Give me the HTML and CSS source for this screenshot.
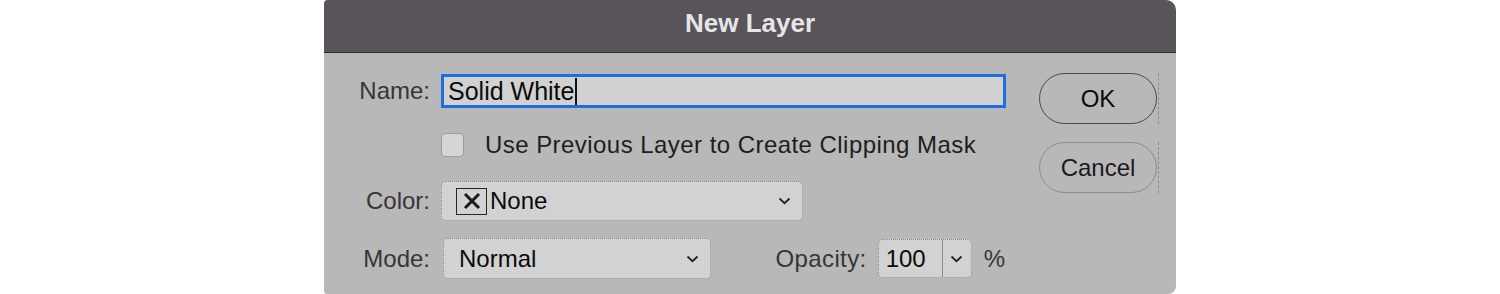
FILE: index.html
```html
<!DOCTYPE html>
<html lang="en">
<head>
<meta charset="utf-8">
<title>New Layer</title>
<link rel="stylesheet" href="styles.css">
</head>
<body>
<div class="dialog">
  <div class="titlebar">New Layer</div>
  <div class="content">
    <div class="form">
      <div class="row row-name">
        <label class="label">Name:</label>
        <div class="textfield"><span class="value">Solid White</span><span class="caret"></span></div>
      </div>
      <div class="row row-check">
        <span class="label"></span>
        <div class="checkline">
          <span class="checkbox"></span>
          <span class="checktext">Use Previous Layer to Create Clipping Mask</span>
        </div>
      </div>
      <div class="row row-color">
        <label class="label">Color:</label>
        <div class="select select-color">
          <span class="xbox"><svg width="22" height="20" viewBox="0 0 22 20"><path d="M4 3 L18 17 M18 3 L4 17" stroke="#1a1a1a" stroke-width="3" fill="none"/></svg></span>
          <span class="selval">None</span>
          <svg class="chev" width="13" height="8" viewBox="0 0 13 8"><path d="M1.5 1.5 L6.5 6.2 L11.5 1.5" stroke="#222" stroke-width="1.8" fill="none"/></svg>
        </div>
      </div>
      <div class="row row-mode">
        <label class="label">Mode:</label>
        <div class="modeline">
          <div class="select select-mode">
            <span class="selval">Normal</span>
            <svg class="chev" width="13" height="8" viewBox="0 0 13 8"><path d="M1.5 1.5 L6.5 6.2 L11.5 1.5" stroke="#222" stroke-width="1.8" fill="none"/></svg>
          </div>
          <div class="opacity">
            <span class="label-inline">Opacity:</span>
            <div class="combo">
              <span class="combo-val">100</span>
              <span class="combo-btn"><svg width="13" height="8" viewBox="0 0 13 8"><path d="M1.5 1.5 L6.5 6.2 L11.5 1.5" stroke="#222" stroke-width="1.8" fill="none"/></svg></span>
            </div>
            <span class="pct">%</span>
          </div>
        </div>
      </div>
    </div>
    <div class="buttons">
      <div class="btnwrap"><button class="btn btn-ok">OK</button></div>
      <div class="btnwrap"><button class="btn btn-cancel">Cancel</button></div>
    </div>
  </div>
</div>
</body>
</html>
```
FILE: styles.css
```css
html, body {
  margin: 0;
  padding: 0;
  background: #ffffff;
}
body {
  font-family: "Liberation Sans", Arial, sans-serif;
}
.dialog {
  width: 852px;
  height: 294px;
  margin: 0 auto;
  background: #b8b8b8;
  border-radius: 4px 10px 8px 3px;
  overflow: hidden;
}
.titlebar {
  height: 52px;
  line-height: 46px;
  background: #59545a;
  border-bottom: 1px solid #2c2a2c;
  color: #e6e6e6;
  font-weight: bold;
  font-size: 26px;
  text-align: center;
}
.content {
  display: flex;
  padding: 20px 0 0 30px;
}
.form {
  width: 652px;
  margin-top: 1px;
  display: flex;
  flex-direction: column;
}
.row {
  display: flex;
  align-items: center;
}
.label {
  width: 76px;
  flex: none;
  text-align: right;
  margin-right: 11px;
  font-size: 24px;
  color: #363636;
}
.row-name { height: 34px; }
.row-check { height: 24px; margin-top: 25px; }
.row-color { height: 40px; margin-top: 24px; }
.row-mode { height: 41px; margin-top: 17px; }

.textfield {
  width: 565px;
  height: 34px;
  box-sizing: border-box;
  border: 3px solid #1b6fe3;
  background: #d1d1d1;
  display: flex;
  align-items: center;
  padding-left: 4px;
  font-size: 25px;
  color: #0a0a0a;
}
.caret {
  width: 2px;
  height: 27px;
  background: #111;
  margin-left: 1px;
}
.checkline {
  display: flex;
  align-items: center;
}
.checkbox {
  width: 23px;
  height: 24px;
  box-sizing: border-box;
  border: 1px solid #9c9c9c;
  border-radius: 4px;
  background: #d6d6d6;
}
.checktext {
  margin-left: 21px;
  font-size: 24px;
  letter-spacing: 0.45px;
  color: #1e1e1e;
}
.select {
  height: 40px;
  box-sizing: border-box;
  border: 1px dotted #8a8a8a;
  border-radius: 5px;
  background: #d2d2d2;
  display: flex;
  align-items: center;
  font-size: 24px;
  color: #0a0a0a;
}
.select-color {
  width: 362px;
  padding-left: 14px;
}
.xbox {
  width: 31px;
  height: 27px;
  box-sizing: border-box;
  border: 1.5px solid #262626;
  display: flex;
  align-items: center;
  justify-content: center;
  margin-right: 3px;
}
.selval {
  flex: 1;
}
.chev {
  margin-right: 11px;
}
.modeline {
  flex: 1;
  display: flex;
  align-items: center;
  margin-left: 2px;
}
.select-mode {
  width: 268px;
  height: 41px;
  padding-left: 15px;
}
.opacity {
  margin-left: auto;
  display: flex;
  align-items: center;
}
.label-inline {
  font-size: 24px;
  color: #363636;
  letter-spacing: 0.4px;
  margin-right: 11px;
}
.combo {
  width: 94px;
  height: 39px;
  box-sizing: border-box;
  border: 1px dotted #8a8a8a;
  border-radius: 5px;
  background: #d2d2d2;
  display: flex;
  align-items: stretch;
}
.combo-val {
  width: 64px;
  box-sizing: border-box;
  padding-left: 7px;
  display: flex;
  align-items: center;
  font-size: 24px;
  color: #0a0a0a;
  border-right: 1px solid #8f8f8f;
}
.combo-btn {
  flex: 1;
  display: flex;
  align-items: center;
  justify-content: center;
}
.pct {
  margin-left: 12px;
  margin-right: 1px;
  font-size: 24px;
  color: #363636;
}
.buttons {
  margin-left: 33px;
  display: flex;
  flex-direction: column;
  gap: 18px;
}
.btnwrap {
  padding-right: 1px;
  border-right: 1px dashed #8e8e8e;
  display: flex;
}
.btn {
  width: 118px;
  height: 51px;
  border-radius: 26px;
  background: #b8b8b8;
  font-family: "Liberation Sans", Arial, sans-serif;
  font-size: 24px;
  color: #0a0a0a;
  padding: 0;
  margin: 0;
}
.btn-ok {
  border: 1.5px solid #4a4a4a;
}
.btn-cancel {
  border: 1.5px solid #8c8c8c;
  color: #1a1a1a;
}
```
